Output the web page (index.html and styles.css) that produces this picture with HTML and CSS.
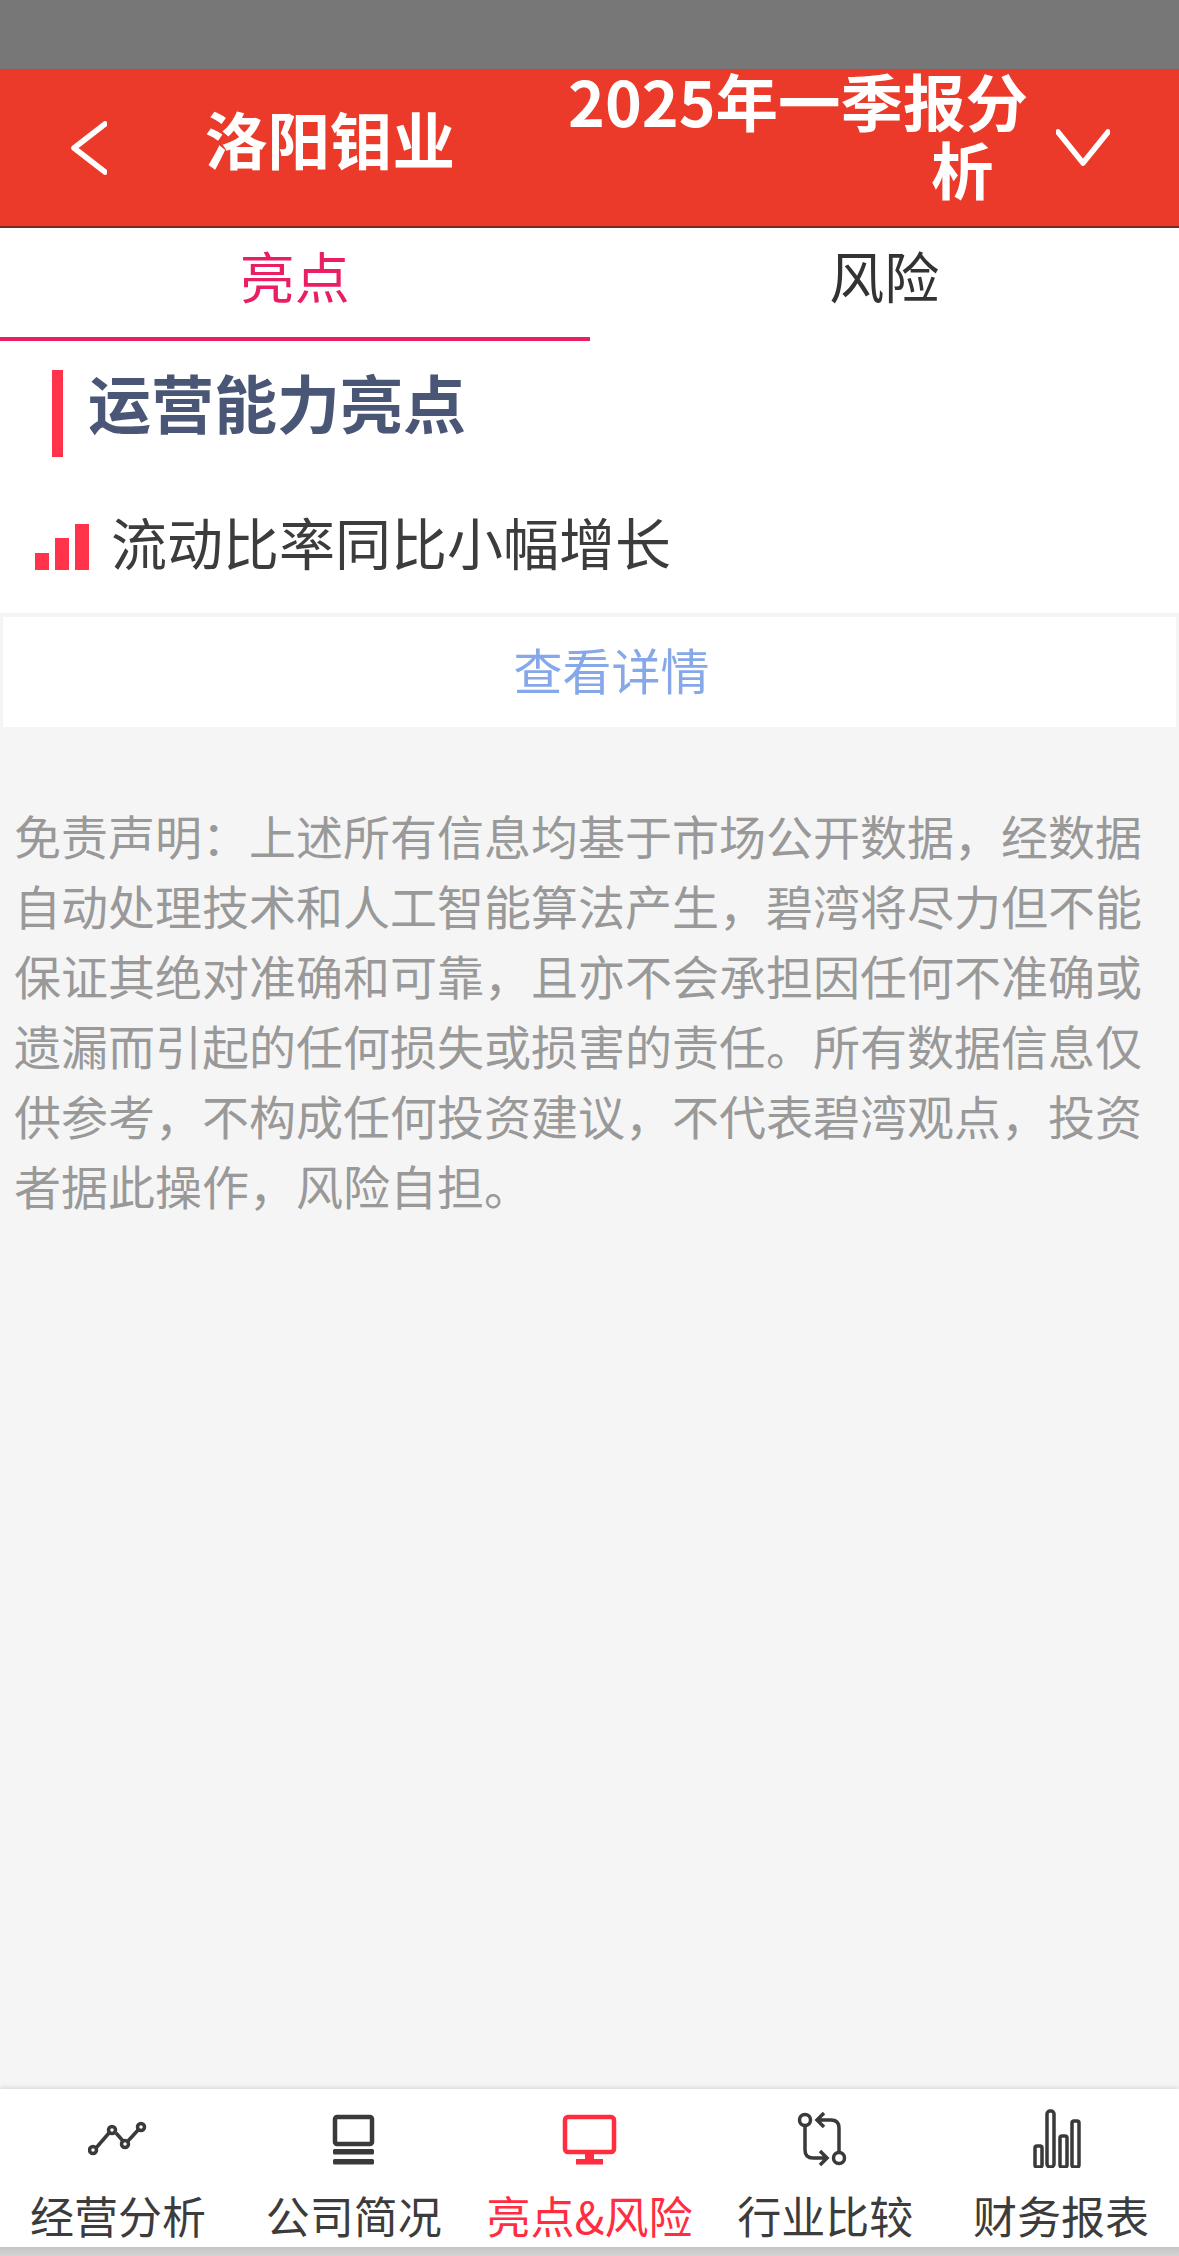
FILE: index.html
```html
<!DOCTYPE html>
<html lang="zh-CN">
<head>
  <meta charset="UTF-8">
  <meta name="viewport" content="width=device-width, initial-scale=1.0">
  <title>亮点&amp;风险</title>
  <link rel="stylesheet" href="styles.css">
</head>
<body>
  <!-- Status bar placeholder -->
  <div class="status-bar"></div>

  <!-- Header -->
  <div class="header">
    <svg class="icon-back" width="38" height="56" viewBox="0 0 38 56">
      <path d="M36 4 L5 28 L36 52" fill="none" stroke="#fff" stroke-width="5.5" stroke-linecap="round" stroke-linejoin="round"/>
    </svg>
    <div class="header-name">洛阳钼业</div>
    <div class="header-title">2025年一季报分析</div>
    <svg class="icon-down" width="54" height="38" viewBox="0 0 54 38">
      <path d="M2 3 L27 34 L52 3" fill="none" stroke="#fff" stroke-width="5.5" stroke-linecap="round" stroke-linejoin="round"/>
    </svg>
  </div>

  <!-- Tabs -->
  <div class="tabs">
    <div class="tab active">亮点</div>
    <div class="tab">风险</div>
  </div>

  <div class="section">
    <div class="section-title"><span>运营能力亮点</span></div>
    <div class="item">
      <div class="signal">
        <i class="signal-low"></i>
        <i class="signal-mid"></i>
        <i class="signal-high"></i>
      </div>
      <span class="item-text">流动比率同比小幅增长</span>
    </div>
  </div>

  <div class="details">查看详情</div>

  <p class="disclaimer">免责声明：上述所有信息均基于市场公开数据，经数据自动处理技术和人工智能算法产生，碧湾将尽力但不能保证其绝对准确和可靠，且亦不会承担因任何不准确或遗漏而引起的任何损失或损害的责任。所有数据信息仅供参考，不构成任何投资建议，不代表碧湾观点，投资者据此操作，风险自担。</p>

  <!-- Bottom navigation -->
  <div class="nav">
    <div class="nav-item">
      <svg width="60" height="60" viewBox="0 0 60 60" fill="none" stroke="#3a3a3a" stroke-width="3.5">
        <path d="M8 40 L21 25 M28 25 L35 33 M40 33 L51 21"/>
        <circle cx="5" cy="42" r="3.5"/>
        <circle cx="24" cy="22" r="3.5"/>
        <circle cx="37" cy="36" r="3.5"/>
        <circle cx="53" cy="19" r="3.5"/>
      </svg>
      <span>经营分析</span>
    </div>
    <div class="nav-item">
      <svg width="60" height="60" viewBox="0 0 60 60">
        <rect x="11" y="9" width="37" height="27" rx="2" fill="none" stroke="#3a3a3a" stroke-width="4.5"/>
        <rect x="9" y="41" width="41" height="5.5" rx="1.5" fill="#3a3a3a"/>
        <rect x="9" y="51" width="41" height="5.5" rx="1.5" fill="#3a3a3a"/>
      </svg>
      <span>公司简况</span>
    </div>
    <div class="nav-item nav-active">
      <svg width="60" height="60" viewBox="0 0 60 60">
        <rect x="6" y="9" width="49" height="35" rx="3" fill="none" stroke="#ff2d3f" stroke-width="4.5"/>
        <rect x="26" y="44" width="9" height="8" fill="#ff2d3f"/>
        <rect x="17" y="51" width="27" height="5.5" fill="#ff2d3f"/>
      </svg>
      <span>亮点&amp;风险</span>
    </div>
    <div class="nav-item">
      <svg width="60" height="60" viewBox="0 0 60 60" fill="none" stroke="#3a3a3a" stroke-width="3.5">
        <circle cx="10" cy="12" r="5.5"/>
        <circle cx="44" cy="50" r="5.5"/>
        <path d="M10 18 V42 Q10 50 18 50 H30 M25 43 L32 50 L25 57"/>
        <path d="M44 44 V20 Q44 12 36 12 H24 M29 5 L22 12 L29 19"/>
      </svg>
      <span>行业比较</span>
    </div>
    <div class="nav-item">
      <svg width="60" height="60" viewBox="0 0 60 60" fill="none" stroke="#3a3a3a" stroke-width="3.5">
        <rect x="4" y="38" width="7" height="21" rx="2"/>
        <rect x="16" y="3" width="7" height="56" rx="3"/>
        <rect x="29" y="28" width="7" height="31" rx="2"/>
        <rect x="41" y="13" width="7" height="46" rx="2"/>
      </svg>
      <span>财务报表</span>
    </div>
  </div>
  <div class="nav-shadow"></div>
</body>
</html>
```

FILE: styles.css
```css
body {
  font-family: "Noto Sans CJK SC", "Noto Sans", sans-serif;
  margin: 0;
  padding: 0;
  width: 1179px;
  height: 2256px;
  background-color: #f5f5f5;
  overflow: hidden;
  display: flex;
  flex-direction: column;
}

.status-bar {
  height: 69px;
  background-color: #777777;
}

.header {
  height: 157px;
  background-color: #ec3a2a;
  border-bottom: 2px solid #7c2a20;
  display: flex;
  align-items: center;
  color: #fff;
  font-weight: 700;
  font-size: 62.5px;
  line-height: 68px;
}

.icon-back {
  margin-left: 69px;
  flex: none;
}

.header-name {
  margin-left: 98px;
  width: 260px;
  margin-bottom: 19px;
  white-space: nowrap;
}

/* second line sits under the end of the first, as in the app */
.header-title {
  margin-left: 466px;
  width: 107px;
  text-indent: -363px;
  margin-bottom: 27px;
  flex: none;
}

.icon-down {
  margin-left: 18px;
  flex: none;
}

.tabs {
  display: flex;
  background-color: #fff;
  height: 113px;
}

.tab {
  flex: 1;
  box-sizing: border-box;
  text-align: center;
  font-size: 55px;
  line-height: 92px;
  color: #333;
}

.tab.active {
  color: #e91e63;
  border-bottom: 4px solid #e91e63;
}

.section {
  background-color: #fff;
  height: 272px;
  padding-top: 29px;
  box-sizing: border-box;
}

.section-title {
  margin-left: 52px;
  height: 87px;
  border-left: 11px solid #ff334a;
  padding-left: 25px;
  font-size: 63px;
  line-height: 62px;
  font-weight: 700;
  color: #4a5675;
}

.item {
  display: flex;
  align-items: center;
  margin-top: 50px;
  padding-left: 35px;
  font-size: 56px;
  color: #3c3c3c;
}

.item-text {
  line-height: 68px;
  margin-bottom: 12px;
}

.signal {
  display: flex;
  align-items: flex-end;
  gap: 6px;
  height: 46px;
  margin-right: 22px;
}

.signal i {
  display: block;
  width: 14px;
  background-color: #ff334a;
}

.signal-low {
  height: 17px;
}

.signal-mid {
  height: 32px;
}

.signal-high {
  height: 46px;
}

.details {
  margin-top: 4px;
  margin-left: 3px;
  margin-right: 3px;
  height: 110px;
  background-color: #fff;
  text-align: center;
  padding-left: 44px;
  box-sizing: border-box;
  font-size: 49px;
  line-height: 104px;
  color: #86a8e8;
}

.disclaimer {
  margin: 73px 14px 0 14px;
  font-size: 47px;
  line-height: 70px;
  color: #999;
  flex: 1;
}

.nav {
  height: 158px;
  background-color: #fff;
  box-shadow: 0 -2px 4px rgba(0, 0, 0, 0.1);
  display: grid;
  grid-template-columns: repeat(5, 1fr);
  flex: none;
}

.nav-item {
  display: flex;
  flex-direction: column;
  align-items: center;
  padding-top: 19px;
  font-size: 44px;
  line-height: 60px;
  color: #3c3c3c;
  white-space: nowrap;
}

.nav-item svg {
  display: block;
  margin-bottom: 17px;
}

.nav-item.nav-active {
  color: #ff2d3f;
}

.nav-shadow {
  height: 9px;
  flex: none;
  background: linear-gradient(to bottom, #c4c4c4, #d4d4d4);
}
```
